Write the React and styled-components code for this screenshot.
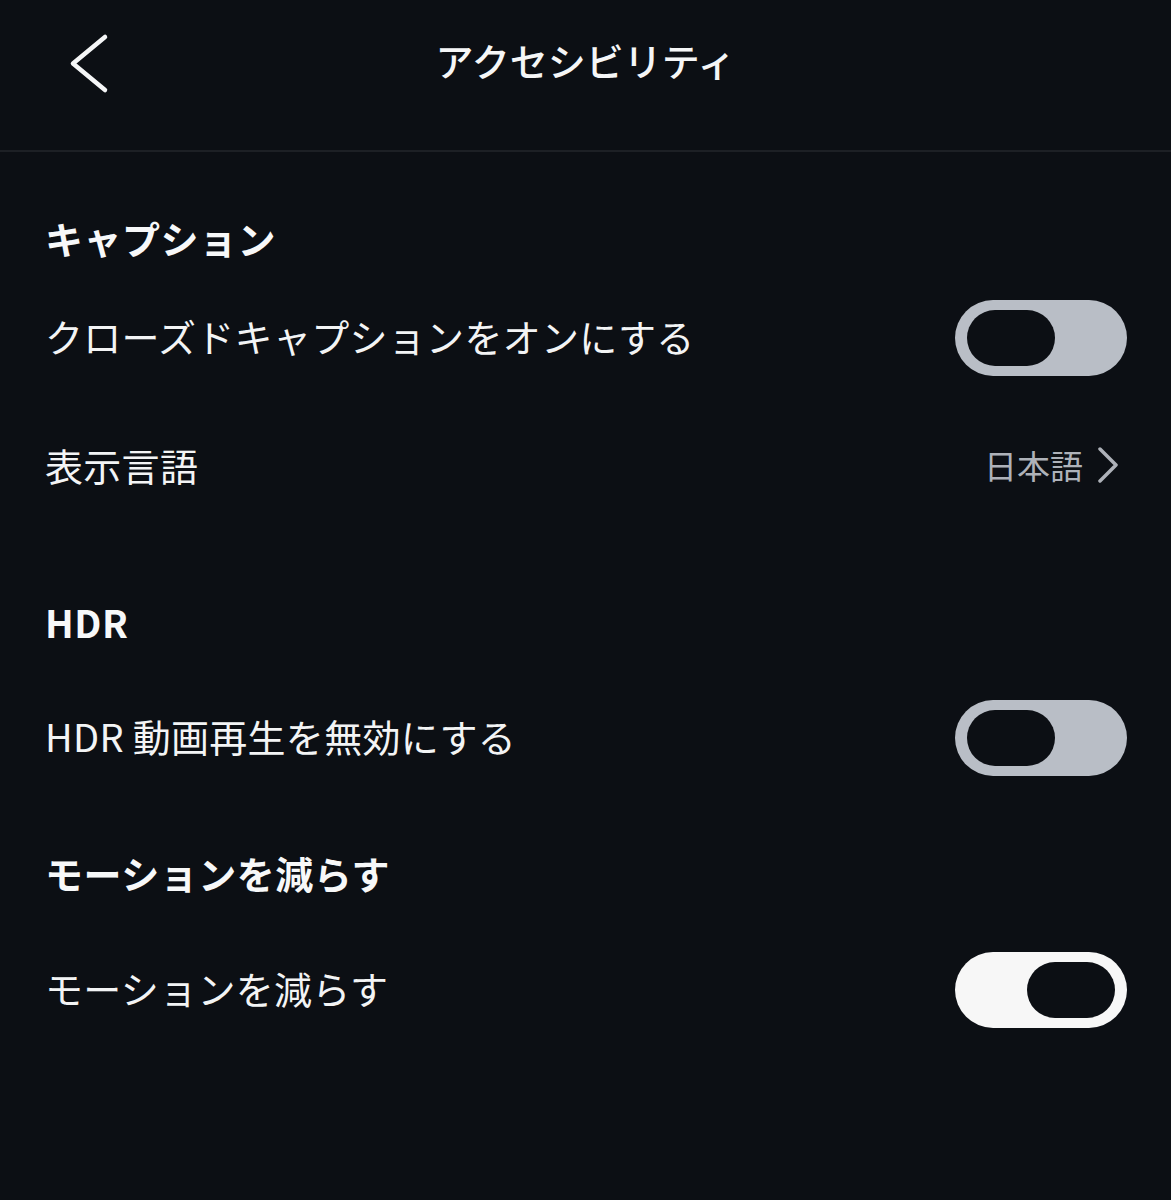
import React, { useState } from "react";
import styled, { createGlobalStyle } from "styled-components";

const GlobalStyle = createGlobalStyle`
  html, body {
    margin: 0;
    padding: 0;
    background: #0c0f14;
  }
  body {
    font-family: "Noto Sans CJK JP", "Noto Sans", sans-serif;
    color: #f5f6f7;
  }
`;

const Page = styled.div`
  width: 1171px;
  min-height: 1200px;
  background: #0c0f14;
`;

const Header = styled.header`
  position: relative;
  height: 152px;
  box-sizing: border-box;
  display: flex;
  align-items: center;
  justify-content: center;
  border-bottom: 2px solid #1d2025;
`;

const BackButton = styled.button`
  position: absolute;
  left: 66px;
  top: 30px;
  width: 46px;
  height: 66px;
  padding: 0;
  border: none;
  background: none;
  cursor: pointer;
  display: flex;
  align-items: center;
  justify-content: center;
`;

const Title = styled.h1`
  margin: 0 0 32px;
  font-size: 38px;
  font-weight: 500;
  color: #f5f6f7;
`;

const Content = styled.main`
  padding: 0 44px 0 45px;
`;

const Section = styled.section`
  padding-top: ${(p) => p.$top}px;
`;

const SectionTitle = styled.h2`
  margin: 0 0 ${(p) => p.$gap}px;
  height: 60px;
  line-height: 56px;
  font-size: 38px;
  font-weight: 700;
  letter-spacing: 0.5px;
  color: #f7f8f9;
`;

const Row = styled.div`
  height: 96px;
  display: flex;
  align-items: center;
  justify-content: space-between;

  & + & {
    margin-top: 33px;
  }
`;

const Label = styled.span`
  padding-bottom: 6px;
  font-size: 38px;
  font-weight: 400;
  letter-spacing: 0.3px;
  color: #f3f4f5;
`;

const ValueLink = styled.button`
  display: flex;
  align-items: center;
  gap: 14px;
  padding: 0 8px 4px 0;
  border: none;
  background: none;
  cursor: pointer;
  font-family: inherit;
  font-size: 33px;
  color: #aeb2b9;
`;

const Track = styled.button`
  width: 172px;
  height: 76px;
  box-sizing: border-box;
  padding: 0 12px;
  border: none;
  border-radius: 38px;
  cursor: pointer;
  display: flex;
  align-items: center;
  justify-content: ${(p) => (p.$on ? "flex-end" : "flex-start")};
  background: ${(p) => (p.$on ? "#f7f7f7" : "#b9bec6")};
`;

const Knob = styled.span`
  width: 88px;
  height: 56px;
  border-radius: 28px;
  background: #0c0f14;
`;

function Toggle({ on, onChange }) {
  return (
    <Track $on={on} onClick={() => onChange(!on)} aria-pressed={on}>
      <Knob />
    </Track>
  );
}

function App() {
  const [captions, setCaptions] = useState(false);
  const [hdr, setHdr] = useState(false);
  const [motion, setMotion] = useState(true);

  return (
    <Page>
      <GlobalStyle />
      <Header>
        <BackButton aria-label="戻る">
          <svg width="46" height="66" viewBox="0 0 46 66">
            <polyline
              points="39,7 7,33.5 39,60"
              fill="none"
              stroke="#f5f6f7"
              strokeWidth="4.5"
              strokeLinecap="round"
              strokeLinejoin="round"
            />
          </svg>
        </BackButton>
        <Title>アクセシビリティ</Title>
      </Header>

      <Content>
        <Section $top={58}>
          <SectionTitle $gap={20}>キャプション</SectionTitle>
          <Row>
            <Label>クローズドキャプションをオンにする</Label>
            <Toggle on={captions} onChange={setCaptions} />
          </Row>
          <Row>
            <Label>表示言語</Label>
            <ValueLink>
              日本語
              <svg width="22" height="36" viewBox="0 0 22 36">
                <polyline
                  points="3,2 19,18 3,34"
                  fill="none"
                  stroke="#aeb2b9"
                  strokeWidth="3.5"
                  strokeLinecap="round"
                  strokeLinejoin="round"
                />
              </svg>
            </ValueLink>
          </Row>
        </Section>

        <Section $top={79}>
          <SectionTitle $gap={36}>HDR</SectionTitle>
          <Row>
            <Label>HDR 動画再生を無効にする</Label>
            <Toggle on={hdr} onChange={setHdr} />
          </Row>
        </Section>

        <Section $top={59}>
          <SectionTitle $gap={37}>モーションを減らす</SectionTitle>
          <Row>
            <Label>モーションを減らす</Label>
            <Toggle on={motion} onChange={setMotion} />
          </Row>
        </Section>
      </Content>
    </Page>
  );
}

export default App;
